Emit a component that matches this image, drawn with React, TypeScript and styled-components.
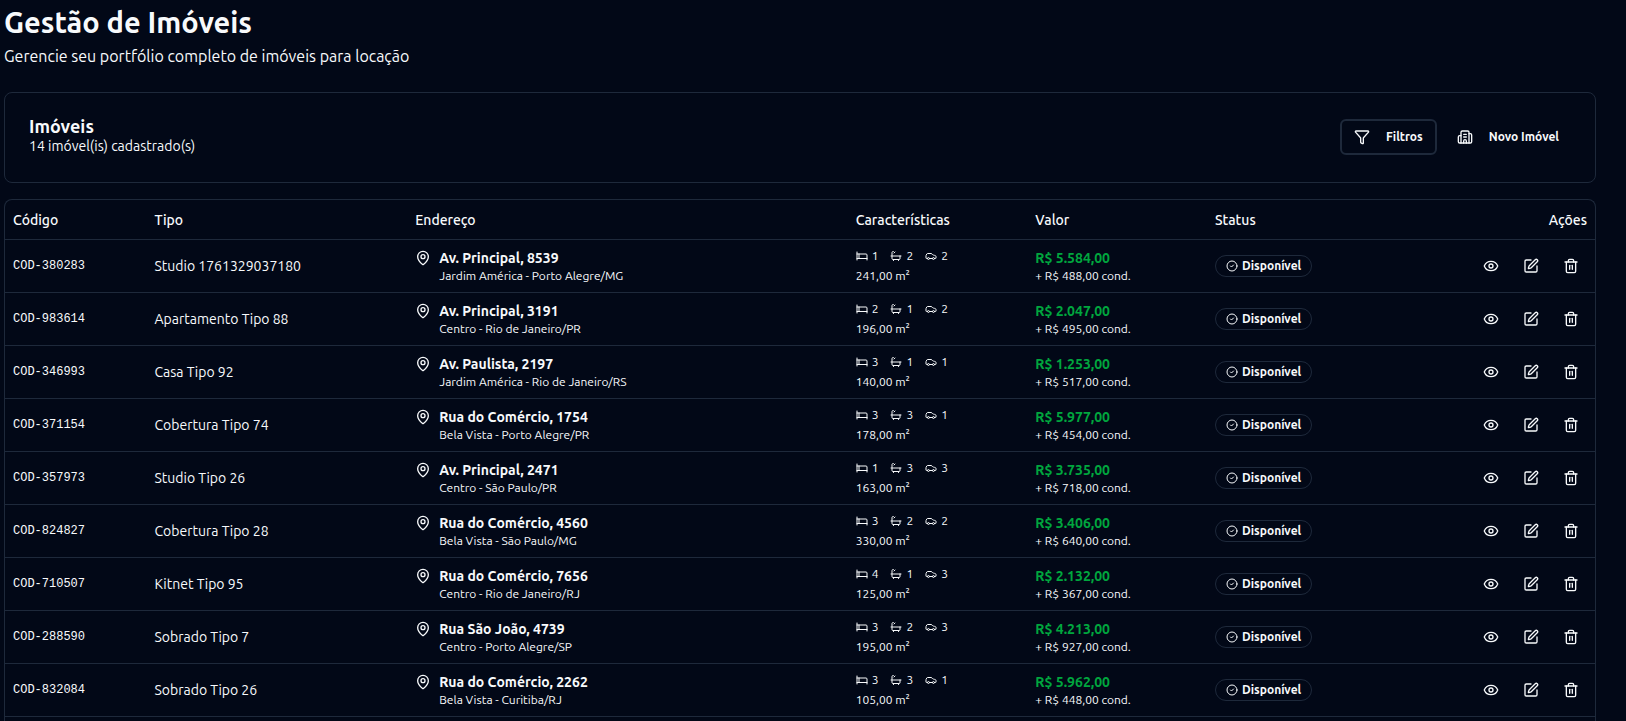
import React from "react";
import styled, { createGlobalStyle } from "styled-components";
import { Bath, Bed, Building2, Car, CircleCheck, Eye, Funnel, MapPin, SquarePen, Trash2 } from "lucide-react";

const color = {
  background: "#020817",
  border: "#1e293b",
  text: "#f8fafc",
  price: "#00a63e",
};

const GlobalStyle = createGlobalStyle`
  *, *::before, *::after {
    box-sizing: border-box;
  }
  body {
    margin: 0;
    background: ${color.background};
    color: ${color.text};
    font-family: Ubuntu, "Open Sans", "Noto Sans", sans-serif;
    font-size: 14px;
    line-height: 20px;
  }
  h1, h2, p {
    margin: 0;
  }
`;

const Page = styled.main`
  display: flex;
  flex-direction: column;
  min-height: 100vh;
  padding: 4px 30px 0 4px;
`;

const PageHeader = styled.header`
  display: flex;
  flex-direction: column;
  gap: 4px;
  margin-bottom: 24px;
`;

const PageTitle = styled.h1`
  font-size: 29px;
  line-height: 36px;
  font-weight: 700;
`;

const PageSubtitle = styled.p`
  font-size: 16px;
  line-height: 24px;
`;

const Card = styled.section`
  display: flex;
  align-items: center;
  justify-content: space-between;
  padding: 24px 24px 25px;
  margin-bottom: 16px;
  border: 1px solid ${color.border};
  border-radius: 8px;
`;

const CardTitle = styled.h2`
  font-size: 18px;
  line-height: 18px;
  font-weight: 600;
`;

const CardText = styled.p`
  line-height: 22px;
`;

const ButtonGroup = styled.div`
  display: flex;
  gap: 8px;
`;

const Button = styled.button<{ $outlined?: boolean }>`
  display: inline-flex;
  align-items: center;
  gap: 16px;
  height: 36px;
  padding: 0 12px;
  border: ${(p) => (p.$outlined ? `2px solid ${color.border}` : "none")};
  border-radius: 6px;
  background: transparent;
  color: inherit;
  font: inherit;
  font-size: 12px;
  font-weight: 600;
  cursor: pointer;
`;

const TableFrame = styled.div`
  flex: 1;
  border: 1px solid ${color.border};
  border-bottom: none;
  border-radius: 8px 8px 0 0;
`;

const Table = styled.table`
  width: 100%;
  table-layout: fixed;
  border-collapse: separate;
  border-spacing: 0;
`;

const HeadCell = styled.th<{ $width: string; $end?: boolean }>`
  width: ${(p) => p.$width};
  height: 40px;
  padding: 0 8px;
  border-bottom: 1px solid ${color.border};
  text-align: ${(p) => (p.$end ? "right" : "left")};
  font-weight: 500;
`;

const Cell = styled.td`
  padding: 8px;
  border-bottom: 1px solid ${color.border};
  vertical-align: middle;
`;

const CodeCell = styled(Cell)`
  font-family: "Liberation Mono", monospace;
  font-size: 12px;
  line-height: 16px;
`;

const Address = styled.div`
  display: flex;
  gap: 8px;

  svg {
    flex: none;
    margin-top: 2px;
  }
`;

const Street = styled.p`
  font-weight: 600;
`;

const Small = styled.p`
  font-size: 12px;
  line-height: 16px;
`;

const Features = styled.div`
  display: flex;
  flex-direction: column;
  gap: 4px;
`;

const FeatureList = styled.div`
  display: flex;
  gap: 12px;
  font-size: 12px;
  line-height: 16px;
`;

const Feature = styled.span`
  display: inline-flex;
  align-items: center;
  gap: 4px;
`;

const Price = styled.p`
  color: ${color.price};
  font-weight: 700;
`;

const Badge = styled.span`
  display: flex;
  align-items: center;
  gap: 4px;
  width: max-content;
  padding: 2px 10px;
  border: 1px solid ${color.border};
  border-radius: 11px;
  font-size: 12px;
  line-height: 16px;
  font-weight: 700;
`;

const Actions = styled.div`
  display: flex;
  justify-content: flex-end;
  gap: 8px;
`;

const IconButton = styled.button`
  display: inline-flex;
  align-items: center;
  justify-content: center;
  width: 32px;
  height: 32px;
  padding: 0;
  border: none;
  border-radius: 6px;
  background: transparent;
  color: inherit;
  cursor: pointer;
`;

type Property = {
  code: string;
  type: string;
  street: string;
  district: string;
  beds: number;
  baths: number;
  cars: number;
  area: string;
  price: string;
  fee: string;
};

const row = (
  code: string, type: string, street: string, district: string,
  beds: number, baths: number, cars: number, area: string, price: string, fee: string,
): Property => ({ code, type, street, district, beds, baths, cars, area, price, fee });

const properties: Property[] = [
  row("COD-380283", "Studio 1761329037180", "Av. Principal, 8539", "Jardim América - Porto Alegre/MG", 1, 2, 2, "241,00", "5.584,00", "488,00"),
  row("COD-983614", "Apartamento Tipo 88", "Av. Principal, 3191", "Centro - Rio de Janeiro/PR", 2, 1, 2, "196,00", "2.047,00", "495,00"),
  row("COD-346993", "Casa Tipo 92", "Av. Paulista, 2197", "Jardim América - Rio de Janeiro/RS", 3, 1, 1, "140,00", "1.253,00", "517,00"),
  row("COD-371154", "Cobertura Tipo 74", "Rua do Comércio, 1754", "Bela Vista - Porto Alegre/PR", 3, 3, 1, "178,00", "5.977,00", "454,00"),
  row("COD-357973", "Studio Tipo 26", "Av. Principal, 2471", "Centro - São Paulo/PR", 1, 3, 3, "163,00", "3.735,00", "718,00"),
  row("COD-824827", "Cobertura Tipo 28", "Rua do Comércio, 4560", "Bela Vista - São Paulo/MG", 3, 2, 2, "330,00", "3.406,00", "640,00"),
  row("COD-710507", "Kitnet Tipo 95", "Rua do Comércio, 7656", "Centro - Rio de Janeiro/RJ", 4, 1, 3, "125,00", "2.132,00", "367,00"),
  row("COD-288590", "Sobrado Tipo 7", "Rua São João, 4739", "Centro - Porto Alegre/SP", 3, 2, 3, "195,00", "4.213,00", "927,00"),
  row("COD-832084", "Sobrado Tipo 26", "Rua do Comércio, 2262", "Bela Vista - Curitiba/RJ", 3, 3, 1, "105,00", "5.962,00", "448,00"),
];

function PropertyRow({ item }: { item: Property }) {
  return (
    <tr>
      <CodeCell>{item.code}</CodeCell>
      <Cell>{item.type}</Cell>
      <Cell>
        <Address>
          <MapPin size={16} />
          <div>
            <Street>{item.street}</Street>
            <Small>{item.district}</Small>
          </div>
        </Address>
      </Cell>
      <Cell>
        <Features>
          <FeatureList>
            <Feature><Bed size={12} />{item.beds}</Feature>
            <Feature><Bath size={12} />{item.baths}</Feature>
            <Feature><Car size={12} />{item.cars}</Feature>
          </FeatureList>
          <Small>{item.area} m²</Small>
        </Features>
      </Cell>
      <Cell>
        <Price>R$ {item.price}</Price>
        <Small>+ R$ {item.fee} cond.</Small>
      </Cell>
      <Cell>
        <Badge><CircleCheck size={12} />Disponível</Badge>
      </Cell>
      <Cell>
        <Actions>
          <IconButton type="button" aria-label="Visualizar"><Eye size={16} /></IconButton>
          <IconButton type="button" aria-label="Editar"><SquarePen size={16} /></IconButton>
          <IconButton type="button" aria-label="Excluir"><Trash2 size={16} /></IconButton>
        </Actions>
      </Cell>
    </tr>
  );
}

export default function App() {
  return (
    <Page>
      <GlobalStyle />
      <PageHeader>
        <PageTitle>Gestão de Imóveis</PageTitle>
        <PageSubtitle>Gerencie seu portfólio completo de imóveis para locação</PageSubtitle>
      </PageHeader>
      <Card>
        <div>
          <CardTitle>Imóveis</CardTitle>
          <CardText>14 imóvel(is) cadastrado(s)</CardText>
        </div>
        <ButtonGroup>
          <Button type="button" $outlined><Funnel size={16} />Filtros</Button>
          <Button type="button"><Building2 size={16} />Novo Imóvel</Button>
        </ButtonGroup>
      </Card>
      <TableFrame>
        <Table>
          <thead>
            <tr>
              <HeadCell $width="8.9%">Código</HeadCell>
              <HeadCell $width="16.4%">Tipo</HeadCell>
              <HeadCell $width="27.7%">Endereço</HeadCell>
              <HeadCell $width="11.3%">Características</HeadCell>
              <HeadCell $width="11.3%">Valor</HeadCell>
              <HeadCell $width="12.3%">Status</HeadCell>
              <HeadCell $width="12.1%" $end>Ações</HeadCell>
            </tr>
          </thead>
          <tbody>
            {properties.map((item) => (
              <PropertyRow key={item.code} item={item} />
            ))}
          </tbody>
        </Table>
      </TableFrame>
    </Page>
  );
}
